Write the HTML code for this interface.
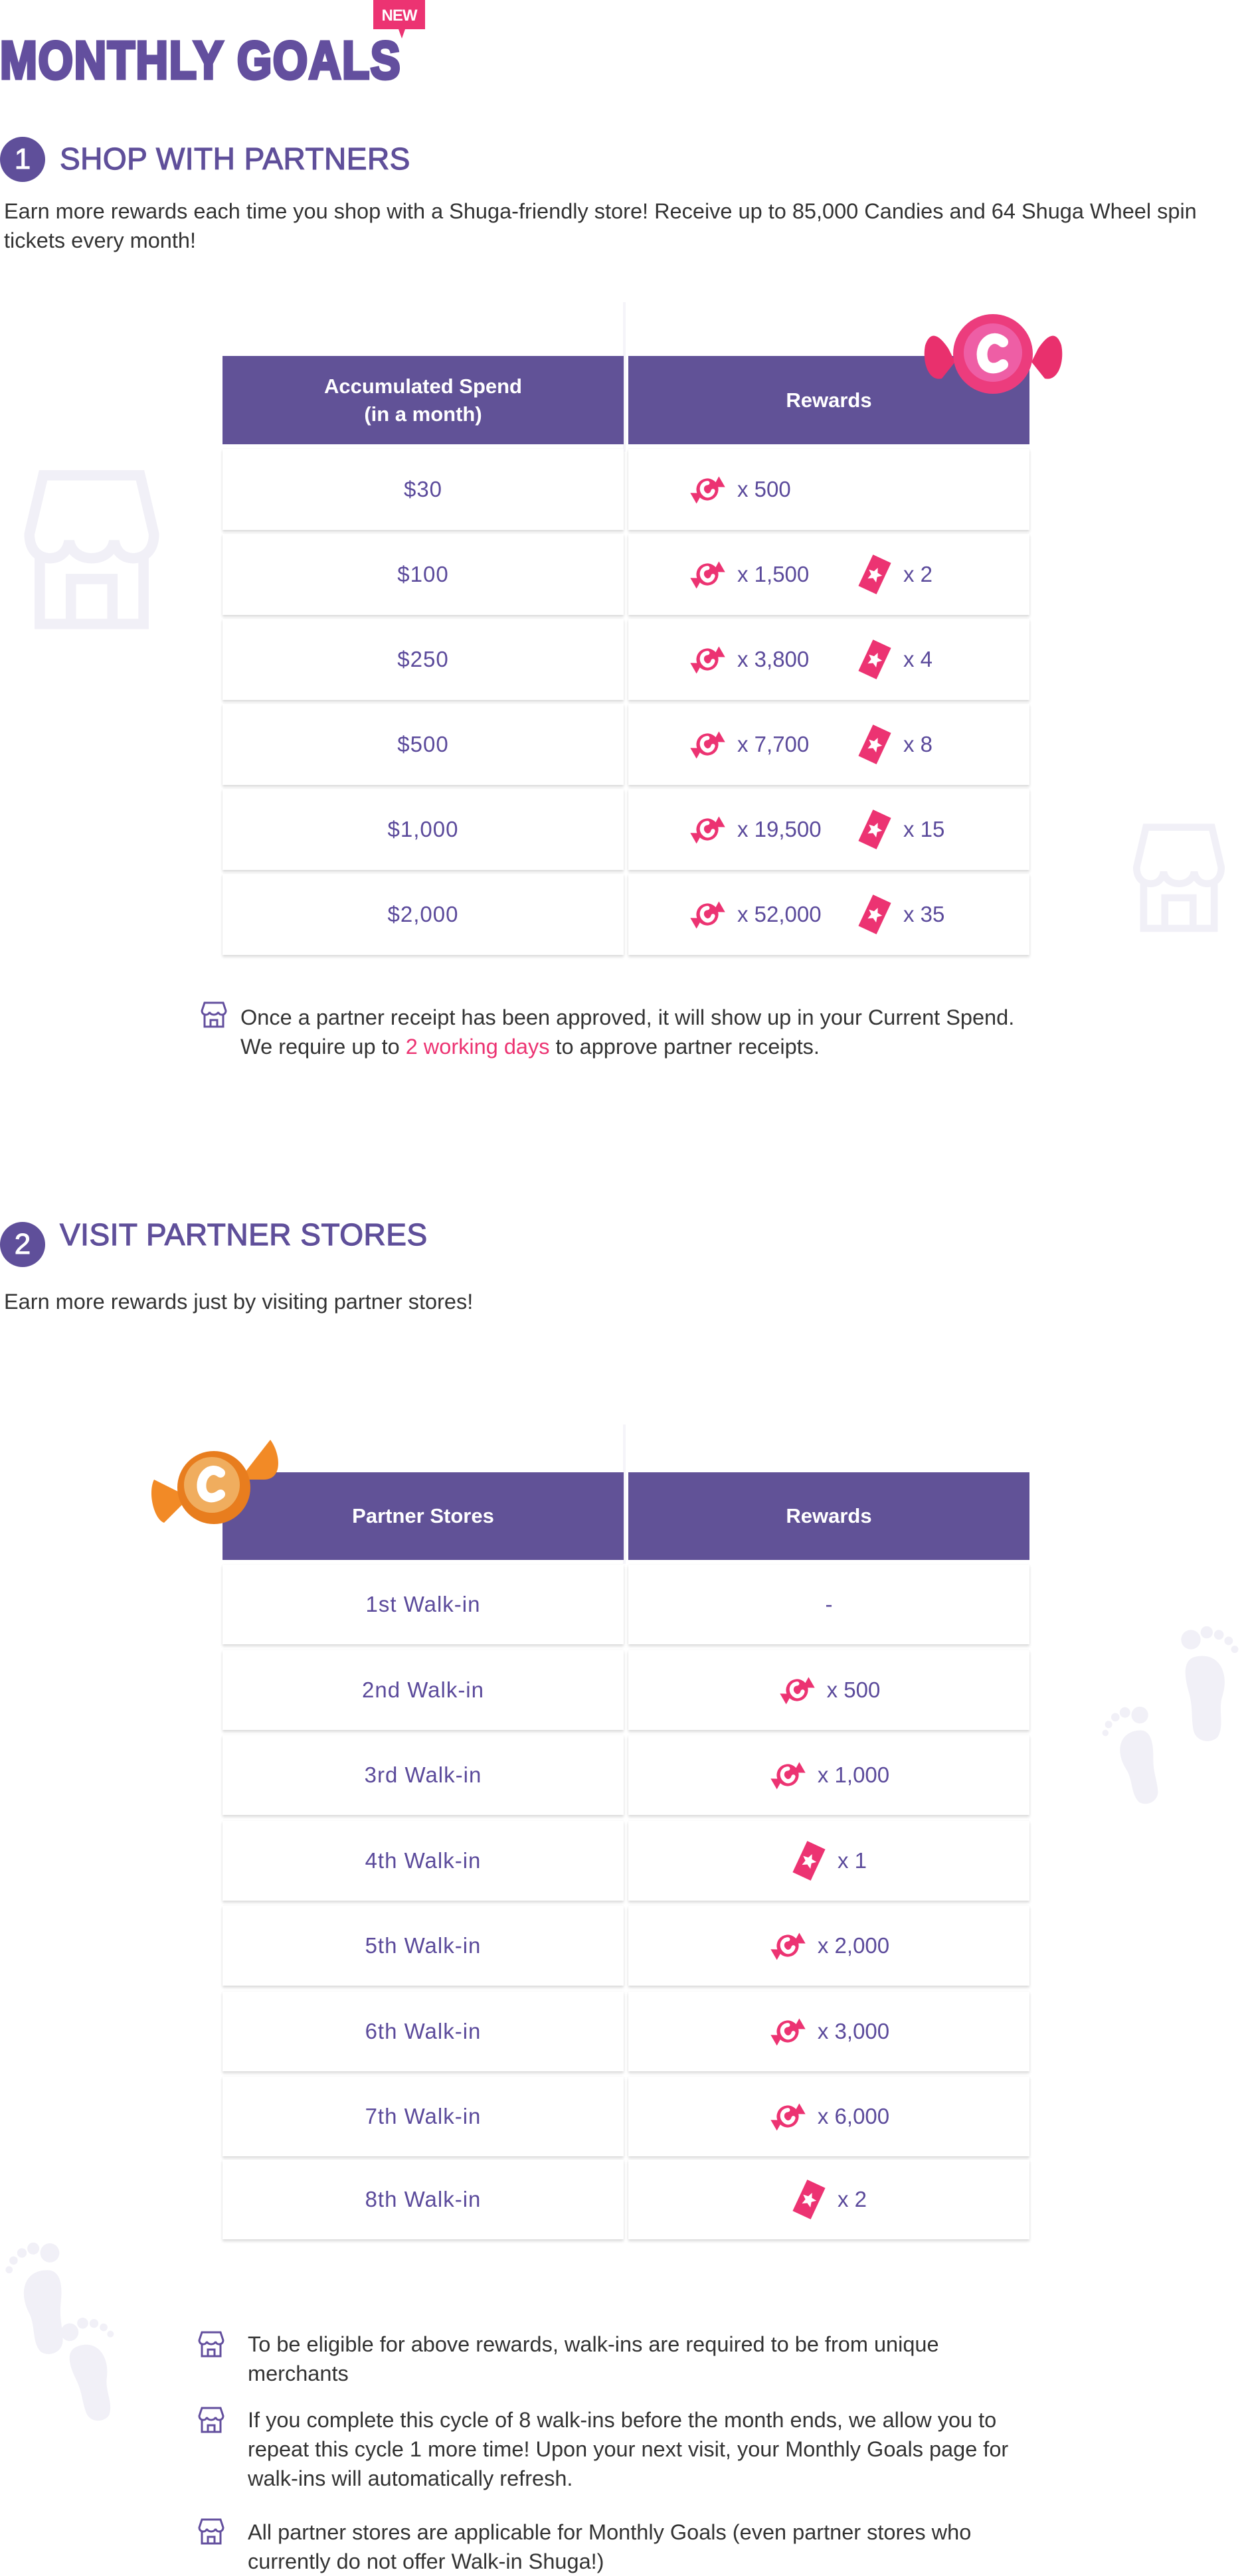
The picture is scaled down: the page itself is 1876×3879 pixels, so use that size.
<!DOCTYPE html>
<html><head><meta charset="utf-8">
<style>
*{margin:0;padding:0;box-sizing:border-box}
body{width:1876px;height:3870px;background:#fff;position:relative;overflow:hidden;font-family:"Liberation Sans",sans-serif;color:#333}
.a{position:absolute}
.title{left:0;top:46px;font-size:80px;font-weight:900;color:#634f9e;letter-spacing:2px;-webkit-text-stroke:5px #634f9e;transform:scaleX(0.84);transform-origin:left top;white-space:nowrap;line-height:90px}
.new{left:562px;top:0;width:78px;height:44px;background:#ec3372;color:#fff;font-size:24px;font-weight:bold;text-align:center;line-height:48px;letter-spacing:-1px}
.new:after{content:"";position:absolute;left:38px;top:44px;border-left:5px solid transparent;border-right:5px solid transparent;border-top:14px solid #ec3372}
.num{width:68px;height:68px;border-radius:50%;background:#5f4f9a;color:#fff;font-size:44px;text-align:center;line-height:68px;-webkit-text-stroke:1px #fff}
.h{font-size:46px;color:#5f4f9a;letter-spacing:0.5px;white-space:nowrap;-webkit-text-stroke:1.2px #5f4f9a}
.p{font-size:32.5px;line-height:44px;color:#333}
.hd{background:#615297;color:#fff;font-size:31px;font-weight:bold;text-align:center;display:flex;align-items:center;justify-content:center;line-height:42px}
.c{background:#fff;box-shadow:0 3px 4px rgba(0,0,0,.14),0 0 2px rgba(0,0,0,.05);display:flex;align-items:center;color:#5b4a9b;font-size:33px}
.l{justify-content:center;letter-spacing:1px}
.r{padding-left:90px}
.rc{justify-content:center}
.r svg,.rc svg{flex:none}
.t{margin-left:16px}
.vl{width:4px;background:#f5f4f9}
</style></head><body>
<svg width="0" height="0" style="position:absolute">
<defs>
<symbol id="cd" viewBox="0 0 56 56">
<g transform="rotate(-30 28 28)">
<path d="M4 20 L14 26 L14 32 L4 38 Z M52 20 L42 26 L42 32 L52 38 Z" fill="#ec3372"/>
<circle cx="28" cy="28" r="16" fill="#ec3372"/>
<path d="M33 20 C25 16 18 24 21 32 C23 38 30 38 34 34" stroke="#fff" stroke-width="6" fill="none" stroke-linecap="round"/>
</g></symbol>
<symbol id="tk" viewBox="0 0 54 60">
<g transform="rotate(25 27 30)">
<rect x="12" y="4" width="30" height="52" fill="#ec3372"/>
<polygon points="27,19 30,26 38,27 32,32 34,40 27,36 20,40 22,32 16,27 24,26" fill="#fff"/>
</g></symbol>
<symbol id="st" viewBox="0 0 40 44">
<path d="M6 4 H34 L38 16 C38 20 35 22 32 22 C29 22 27 20 26.5 18 C26 20 23.5 22 20 22 C16.5 22 14 20 13.5 18 C13 20 11 22 8 22 C5 22 2 20 2 16 Z" fill="none" stroke="#634f9e" stroke-width="3"/>
<path d="M6 22 V40 H34 V22 M15 40 V30 H25 V40" fill="none" stroke="#634f9e" stroke-width="3"/>
</symbol>
<symbol id="bst" viewBox="0 0 40 48">
<path d="M6 3 H34 L38 20 C38 25 35 27 32 27 C29 27 27 25 26.5 22 C26 25 23.5 27 20 27 C16.5 27 14 25 13.5 22 C13 25 11 27 8 27 C5 27 2 25 2 20 Z" fill="none" stroke="#f1f0f7" stroke-width="3"/>
<path d="M5 26 V46 H35 V26 M14 46 V33 H26 V46" fill="none" stroke="#f1f0f7" stroke-width="3"/>
</symbol>
<symbol id="ft" viewBox="0 0 60 100">
<path d="M22 28 C40 24 50 40 44 60 C40 72 46 84 40 94 C34 100 22 98 20 88 C18 76 20 70 16 56 C12 42 12 30 22 28 Z" fill="#f1f0f7"/>
<circle cx="18" cy="14" r="8" fill="#f1f0f7"/><circle cx="31" cy="8" r="5" fill="#f1f0f7"/><circle cx="41" cy="10" r="4" fill="#f1f0f7"/><circle cx="49" cy="15" r="3.5" fill="#f1f0f7"/><circle cx="54" cy="22" r="3" fill="#f1f0f7"/>
</symbol>
</defs></svg>

<div class="a new">NEW</div>
<div class="a title">MONTHLY GOALS</div>

<div class="a num" style="left:0;top:206px">1</div>
<div class="a h" style="left:90px;top:212px">SHOP WITH PARTNERS</div>
<div class="a p" style="left:6px;top:296px;width:1820px">Earn more rewards each time you shop with a Shuga-friendly store! Receive up to 85,000 Candies and 64 Shuga Wheel spin tickets every month!</div>

<svg class="a" style="left:28px;top:700px" width="220" height="250"><use href="#bst" width="220" height="250"/></svg>
<svg class="a" style="left:1690px;top:1235px" width="170" height="170"><use href="#bst" width="170" height="170"/></svg>

<div class="a vl" style="left:938px;top:455px;height:225px"></div>
<div class="a hd" style="left:335px;top:536px;width:604px;height:133px">Accumulated Spend<br>(in a month)</div>
<div class="a hd" style="left:946px;top:536px;width:604px;height:133px">Rewards</div>
<svg class="a" style="left:1388px;top:470px" width="215" height="126" viewBox="0 0 215 126">
<path d="M40 55 C20 25 10 35 5 50 C0 75 10 105 30 100 L50 75 Z" fill="#e9306d"/>
<path d="M175 55 C195 25 205 35 210 50 C215 75 205 105 185 100 L165 75 Z" fill="#e9306d"/>
<circle cx="107" cy="63" r="60" fill="#ec3c7d"/>
<circle cx="107" cy="61" r="44" fill="#ee5ea5"/>
<path d="M122 45 C105 30 85 50 92 73 C97 87 112 87 122 79" stroke="#fff" stroke-width="16" fill="none" stroke-linecap="round"/>
</svg>

<div class="a c l" style="left:335px;top:676px;width:604px;height:122px">$30</div>
<div class="a c r" style="left:946px;top:676px;width:604px;height:122px"><svg width="58" height="58"><use href="#cd"/></svg><span class="t">x 500</span></div>
<div class="a c l" style="left:335px;top:804px;width:604px;height:122px">$100</div>
<div class="a c r" style="left:946px;top:804px;width:604px;height:122px"><svg width="58" height="58"><use href="#cd"/></svg><span class="t" style="width:180px">x 1,500</span><svg width="54" height="60"><use href="#tk"/></svg><span class="t">x 2</span></div>
<div class="a c l" style="left:335px;top:932px;width:604px;height:122px">$250</div>
<div class="a c r" style="left:946px;top:932px;width:604px;height:122px"><svg width="58" height="58"><use href="#cd"/></svg><span class="t" style="width:180px">x 3,800</span><svg width="54" height="60"><use href="#tk"/></svg><span class="t">x 4</span></div>
<div class="a c l" style="left:335px;top:1060px;width:604px;height:122px">$500</div>
<div class="a c r" style="left:946px;top:1060px;width:604px;height:122px"><svg width="58" height="58"><use href="#cd"/></svg><span class="t" style="width:180px">x 7,700</span><svg width="54" height="60"><use href="#tk"/></svg><span class="t">x 8</span></div>
<div class="a c l" style="left:335px;top:1188px;width:604px;height:122px">$1,000</div>
<div class="a c r" style="left:946px;top:1188px;width:604px;height:122px"><svg width="58" height="58"><use href="#cd"/></svg><span class="t" style="width:180px">x 19,500</span><svg width="54" height="60"><use href="#tk"/></svg><span class="t">x 15</span></div>
<div class="a c l" style="left:335px;top:1316px;width:604px;height:122px">$2,000</div>
<div class="a c r" style="left:946px;top:1316px;width:604px;height:122px"><svg width="58" height="58"><use href="#cd"/></svg><span class="t" style="width:180px">x 52,000</span><svg width="54" height="60"><use href="#tk"/></svg><span class="t">x 35</span></div>

<svg class="a" style="left:302px;top:1506px" width="40" height="44"><use href="#st"/></svg>
<div class="a p" style="left:362px;top:1510px;white-space:nowrap">Once a partner receipt has been approved, it will show up in your Current Spend.<br>We require up to <span style="color:#ec3372">2 working days</span> to approve partner receipts.</div>

<div class="a num" style="left:0;top:1840px">2</div>
<div class="a h" style="left:90px;top:1832px">VISIT PARTNER STORES</div>
<div class="a p" style="left:6px;top:1938px">Earn more rewards just by visiting partner stores!</div>

<svg class="a" style="left:1760px;top:2440px" width="110" height="190"><use href="#ft" width="110" height="190"/></svg>
<svg class="a" style="left:1665px;top:2560px;transform:scaleX(-1) rotate(15deg)" width="95" height="165"><use href="#ft" width="95" height="165"/></svg>
<svg class="a" style="left:10px;top:3370px;transform:scaleX(-1) rotate(10deg)" width="110" height="180"><use href="#ft" width="110" height="180"/></svg>
<svg class="a" style="left:85px;top:3480px;transform:rotate(-10deg)" width="100" height="175"><use href="#ft" width="100" height="175"/></svg>

<div class="a vl" style="left:938px;top:2145px;height:210px"></div>
<div class="a hd" style="left:335px;top:2217px;width:604px;height:132px">Partner Stores</div>
<div class="a hd" style="left:946px;top:2217px;width:604px;height:132px">Rewards</div>
<svg class="a" style="left:222px;top:2158px" width="220" height="140" viewBox="0 0 220 140">
<path d="M50 90 L10 70 C0 90 10 130 25 135 L55 105 Z" fill="#f28a26"/>
<path d="M150 55 L185 10 C200 30 205 70 175 70 L140 70 Z" fill="#f28a26"/>
<circle cx="100" cy="82" r="55" fill="#e87d1e"/>
<circle cx="97" cy="78" r="42" fill="#f0ad5e"/>
<path d="M110 60 C95 48 78 65 82 85 C86 100 100 100 110 92" stroke="#fff" stroke-width="14" fill="none" stroke-linecap="round"/>
</svg>

<div class="a c l" style="left:335px;top:2356px;width:604px;height:120px">1st Walk-in</div>
<div class="a c rc" style="left:946px;top:2356px;width:604px;height:120px">-</div>
<div class="a c l" style="left:335px;top:2485px;width:604px;height:120px">2nd Walk-in</div>
<div class="a c rc" style="left:946px;top:2485px;width:604px;height:120px"><svg width="58" height="58"><use href="#cd"/></svg><span class="t">x 500</span></div>
<div class="a c l" style="left:335px;top:2613px;width:604px;height:120px">3rd Walk-in</div>
<div class="a c rc" style="left:946px;top:2613px;width:604px;height:120px"><svg width="58" height="58"><use href="#cd"/></svg><span class="t">x 1,000</span></div>
<div class="a c l" style="left:335px;top:2742px;width:604px;height:120px">4th Walk-in</div>
<div class="a c rc" style="left:946px;top:2742px;width:604px;height:120px"><svg width="54" height="60"><use href="#tk"/></svg><span class="t">x 1</span></div>
<div class="a c l" style="left:335px;top:2870px;width:604px;height:120px">5th Walk-in</div>
<div class="a c rc" style="left:946px;top:2870px;width:604px;height:120px"><svg width="58" height="58"><use href="#cd"/></svg><span class="t">x 2,000</span></div>
<div class="a c l" style="left:335px;top:2999px;width:604px;height:120px">6th Walk-in</div>
<div class="a c rc" style="left:946px;top:2999px;width:604px;height:120px"><svg width="58" height="58"><use href="#cd"/></svg><span class="t">x 3,000</span></div>
<div class="a c l" style="left:335px;top:3127px;width:604px;height:120px">7th Walk-in</div>
<div class="a c rc" style="left:946px;top:3127px;width:604px;height:120px"><svg width="58" height="58"><use href="#cd"/></svg><span class="t">x 6,000</span></div>
<div class="a c l" style="left:335px;top:3252px;width:604px;height:120px">8th Walk-in</div>
<div class="a c rc" style="left:946px;top:3252px;width:604px;height:120px"><svg width="54" height="60"><use href="#tk"/></svg><span class="t">x 2</span></div>

<svg class="a" style="left:298px;top:3508px" width="40" height="44"><use href="#st"/></svg>
<div class="a p" style="left:373px;top:3508px;width:1190px">To be eligible for above rewards, walk-ins are required to be from unique merchants</div>
<svg class="a" style="left:298px;top:3622px" width="40" height="44"><use href="#st"/></svg>
<div class="a p" style="left:373px;top:3622px;width:1200px">If you complete this cycle of 8 walk-ins before the month ends, we allow you to repeat this cycle 1 more time! Upon your next visit, your Monthly Goals page for walk-ins will automatically refresh.</div>
<svg class="a" style="left:298px;top:3790px" width="40" height="44"><use href="#st"/></svg>
<div class="a p" style="left:373px;top:3791px;width:1190px">All partner stores are applicable for Monthly Goals (even partner stores who currently do not offer Walk-in Shuga!)</div>
</body></html>
